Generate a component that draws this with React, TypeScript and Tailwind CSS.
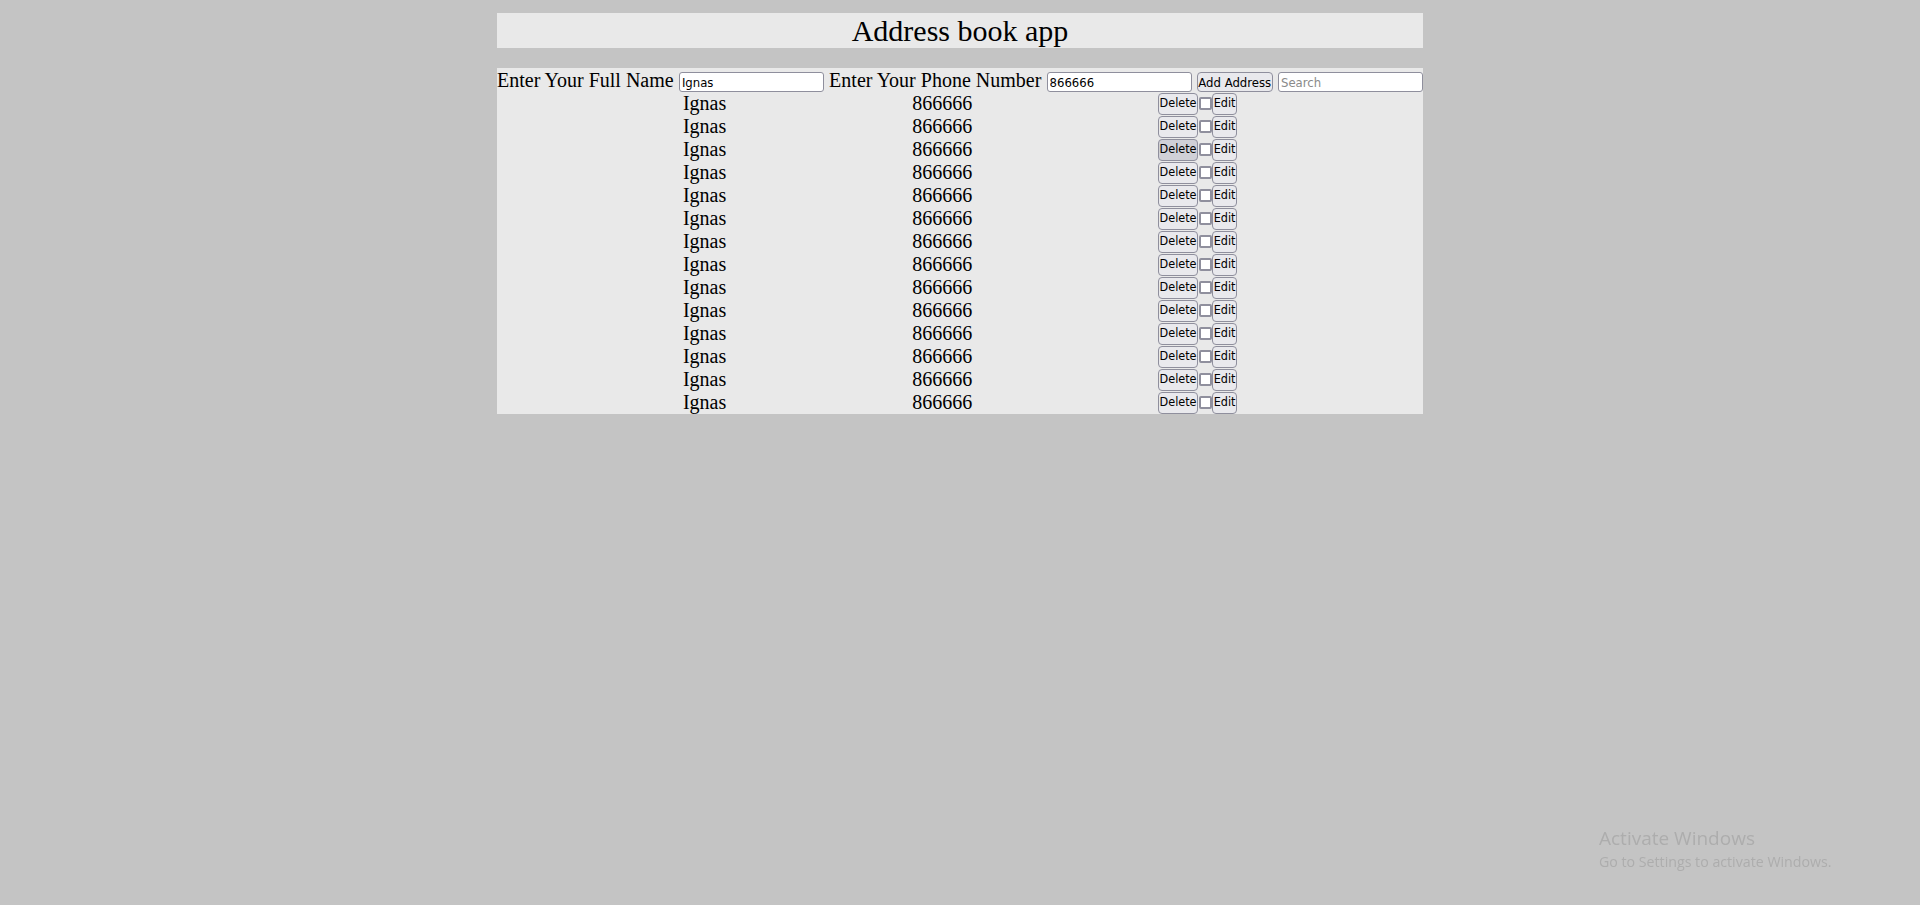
import React, { useState } from "react";

type Entry = { name: string; phone: string };

const serif = "font-['Liberation_Serif','Times_New_Roman',serif]";
const ui = "font-['DejaVu_Sans_Condensed','Liberation_Sans',sans-serif]";

const App = () => {
  const [name, setName] = useState("Ignas");
  const [phone, setPhone] = useState("866666");
  const [search, setSearch] = useState("");
  const [entries, setEntries] = useState<Entry[]>(
    Array.from({ length: 14 }, () => ({ name: "Ignas", phone: "866666" }))
  );

  const addAddress = () => {
    setEntries((e) => [...e, { name, phone }]);
  };

  const removeAt = (index: number) => {
    setEntries((e) => e.filter((_, i) => i !== index));
  };

  const shown = entries.filter((e) =>
    e.name.toLowerCase().includes(search.toLowerCase())
  );

  return (
    <div className={`min-h-screen w-full bg-[#c4c4c4] pt-[13px] text-black ${serif}`}>
      <div className="mx-auto w-[926px]">
        <h1 className="h-[35px] bg-[#e9e9e9] text-center text-[30px] leading-[35px]">
          Address book app
        </h1>

        <div className="mt-[20px] bg-[#e9e9e9]">
          <div className="flex h-[24px] items-end justify-between whitespace-nowrap text-[20px] leading-[23px]">
            <span>Enter Your Full Name</span>
            <input
              className={`h-[20px] w-[145px] rounded-[3px] border border-[#8f8f9d] bg-white px-[2px] text-[13px] outline-none ${ui}`}
              value={name}
              onChange={(e) => setName(e.target.value)}
            />
            <span>Enter Your Phone Number</span>
            <input
              className={`h-[20px] w-[145px] rounded-[3px] border border-[#8f8f9d] bg-white px-[2px] text-[13px] outline-none ${ui}`}
              value={phone}
              onChange={(e) => setPhone(e.target.value)}
            />
            <button
              className={`h-[20px] w-[76px] rounded-[4px] border border-[#8f8f9d] bg-[#e9e9ed] p-0 text-[13px] leading-none ${ui}`}
              onClick={addAddress}
            >
              Add Address
            </button>
            <input
              className={`h-[20px] w-[145px] rounded-[3px] border border-[#8f8f9d] bg-white px-[2px] text-[13px] outline-none placeholder:text-[#8a8a8a] ${ui}`}
              placeholder="Search"
              value={search}
              onChange={(e) => setSearch(e.target.value)}
            />
          </div>

          {shown.map((entry, index) => (
            <div
              key={index}
              className="flex h-[23px] items-center justify-evenly text-[20px] leading-[23px]"
            >
              <span>{entry.name}</span>
              <span>{entry.phone}</span>
              <div className="flex items-center">
                <button
                  className={`h-[22px] w-[40px] rounded-[4px] border border-[#8f8f9d] p-0 text-[12.5px] leading-none ${
                    index === 2 ? "bg-[#d0d0d7]" : "bg-[#e9e9ed]"
                  } ${ui}`}
                  onClick={() => removeAt(index)}
                >
                  Delete
                </button>
                <input
                  type="checkbox"
                  className="ml-[1px] h-[13px] w-[13px] appearance-none rounded-[2px] border-2 border-[#8f8f9d] bg-white"
                />
                <button
                  className={`h-[22px] w-[25px] rounded-[4px] border border-[#8f8f9d] bg-[#e9e9ed] p-0 text-[12.5px] leading-none ${ui}`}
                >
                  Edit
                </button>
              </div>
            </div>
          ))}
        </div>
      </div>

      <div className="pointer-events-none fixed left-[1599px] top-[826px] font-['Open_Sans',sans-serif] text-[#adadad]">
        <p className="text-[19px] leading-[24px]">Activate Windows</p>
        <p className="mt-[2px] text-[14.2px] leading-[19px]">Go to Settings to activate Windows.</p>
      </div>
    </div>
  );
};

export default App;
